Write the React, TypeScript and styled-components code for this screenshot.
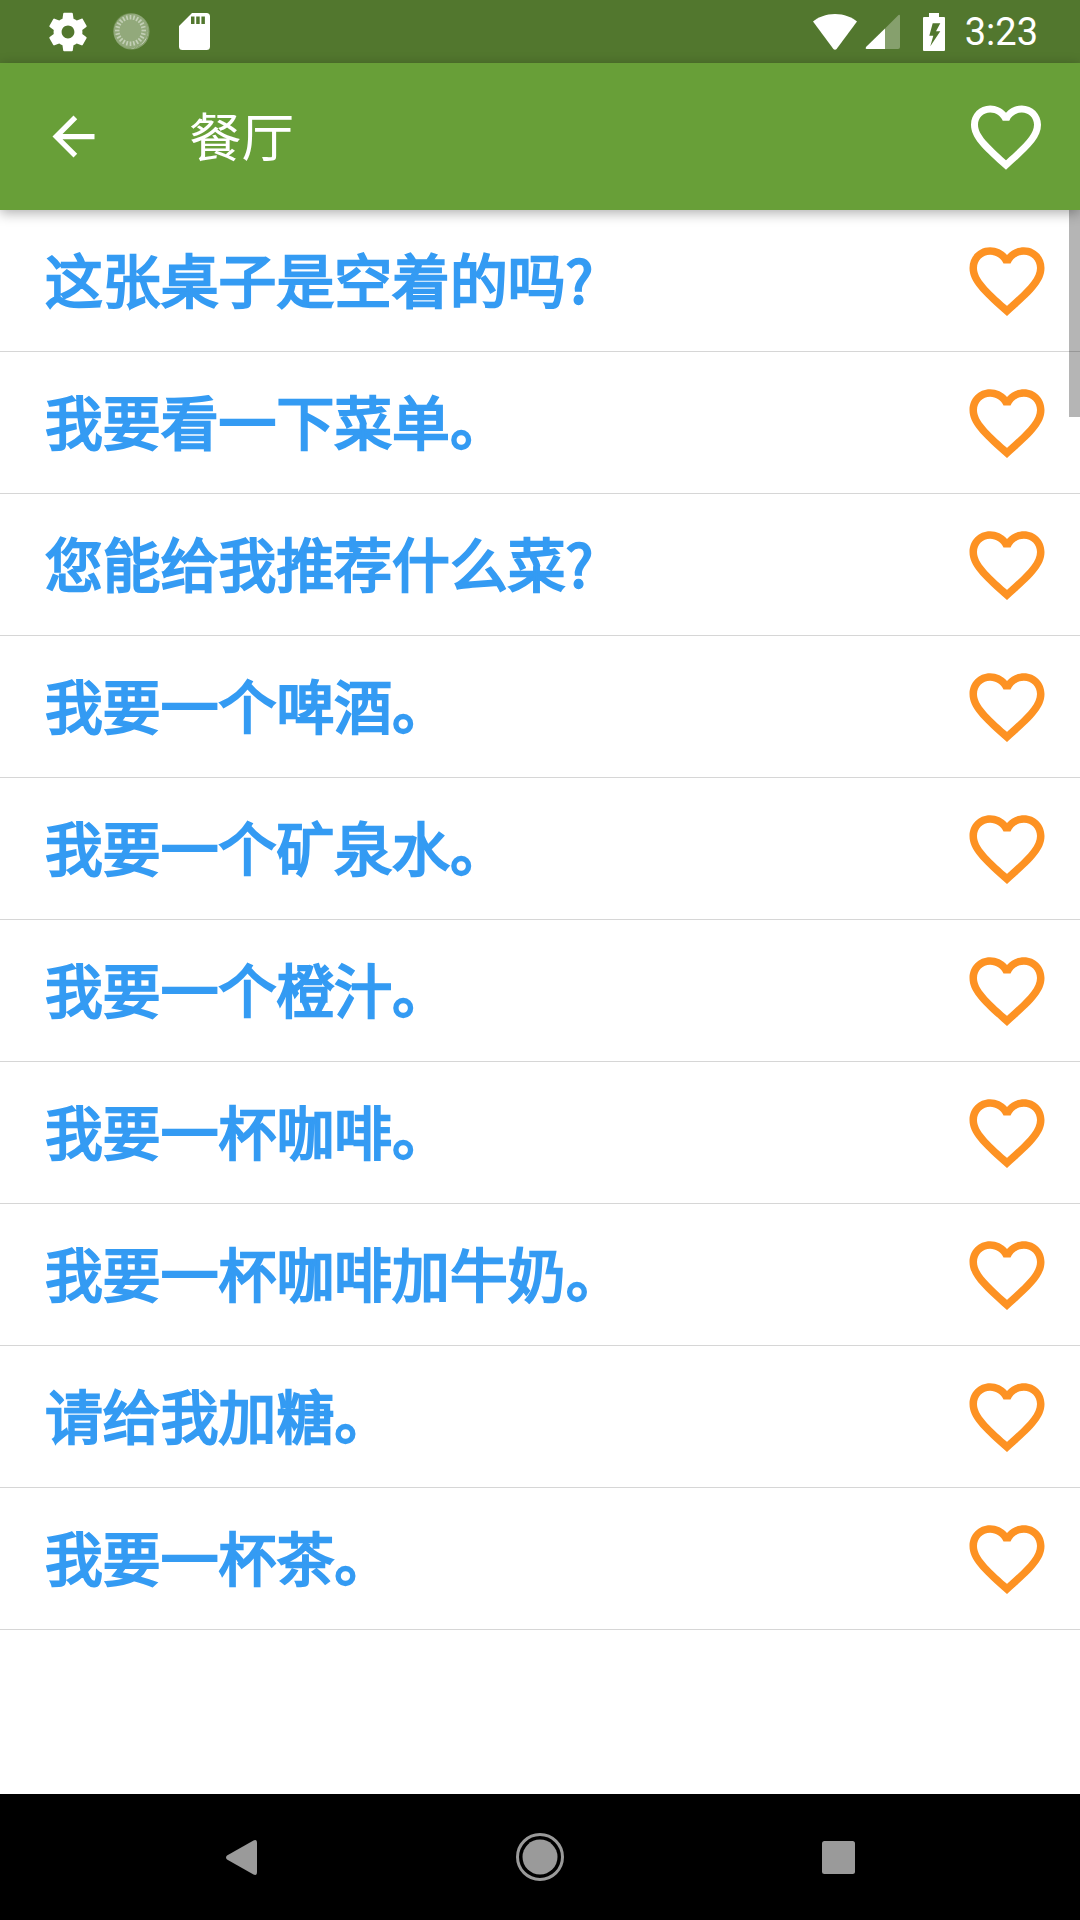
import React from 'react';
import styled, { createGlobalStyle } from 'styled-components';

const GlobalStyle = createGlobalStyle`
  html, body {
    margin: 0;
    padding: 0;
    background: #fff;
  }
`;

const Screen = styled.div`
  width: 1080px;
  height: 1920px;
  display: flex;
  flex-direction: column;
  overflow: hidden;
  font-family: Roboto, 'Noto Sans CJK SC', sans-serif;
`;

const StatusBar = styled.div`
  height: 63px;
  flex: none;
  background: #52772e;
  display: flex;
  align-items: center;
  justify-content: space-between;
  padding: 0 42px 0 44px;
`;

const StatusGroup = styled.div`
  display: flex;
  align-items: center;
`;

const StatusIcon = styled.svg<{ $gap?: number; $nudge?: number }>`
  display: block;
  flex: none;
  margin-left: ${({ $gap }) => $gap ?? 0}px;
  margin-top: ${({ $nudge }) => $nudge ?? 0}px;
`;

const Clock = styled.span`
  margin-left: 20px;
  font-size: 38px;
  line-height: 63px;
  padding-top: 2px;
  color: #fff;
`;

const AppBar = styled.header`
  height: 147px;
  flex: none;
  background: #689f38;
  display: flex;
  align-items: center;
  padding: 0 32px 0 42px;
  box-shadow: 0 3px 12px rgba(0, 0, 0, 0.32);
  position: relative;
  z-index: 1;
`;

const Title = styled.h1`
  flex: 1;
  margin: 5px 0 0 84px;
  font-size: 52.5px;
  font-weight: 400;
  line-height: 1;
  color: #fff;
`;

const PhraseList = styled.main`
  flex: 1;
  position: relative;
`;

const Row = styled.div`
  height: 142px;
  box-sizing: border-box;
  display: flex;
  align-items: center;
  justify-content: space-between;
  padding: 0 28.5px 0 45px;
  border-bottom: 1px solid #d6d6d6;
`;

const Phrase = styled.span`
  font-family: 'Noto Sans CJK SC', sans-serif;
  font-size: 57.75px;
  font-weight: 400;
  line-height: 1;
  padding-bottom: 3px;
  letter-spacing: 0.1px;
  color: #349bf3;
  -webkit-text-stroke: 2.4px #349bf3;
`;

const Scrollbar = styled.div`
  position: absolute;
  top: 0;
  right: 0;
  width: 11px;
  height: 207px;
  background: rgba(0, 0, 0, 0.29);
`;

const NavBar = styled.nav`
  height: 126px;
  flex: none;
  background: #000;
  display: flex;
  align-items: center;
  padding-left: 226px;
`;

const HeartPath =
  'M16.5 3c-1.74 0-3.41.81-4.5 2.09C10.91 3.81 9.24 3 7.5 3 4.42 3 2 5.42 2 8.5c0 3.78 3.4 6.86 8.55 11.54L12 21.35l1.45-1.32C18.6 15.36 22 12.28 22 8.5 22 5.42 19.58 3 16.5 3zm-4.4 15.55l-.1.1-.1-.1C7.14 14.24 4 11.39 4 8.5 4 6.5 5.5 5 7.5 5c1.54 0 3.04.99 3.57 2.36h1.87C13.46 5.99 14.96 5 16.5 5c2 0 3.5 1.5 3.5 3.5 0 2.89-3.14 5.74-7.9 10.05z';

function Heart({ size, color }: { size: number; color: string }) {
  return (
    <svg width={size} height={size} viewBox='0 0 24 24' fill={color} style={{ flex: 'none' }}>
      <path d={HeartPath} />
    </svg>
  );
}

const phrases = [
  '这张桌子是空着的吗?',
  '我要看一下菜单。',
  '您能给我推荐什么菜?',
  '我要一个啤酒。',
  '我要一个矿泉水。',
  '我要一个橙汁。',
  '我要一杯咖啡。',
  '我要一杯咖啡加牛奶。',
  '请给我加糖。',
  '我要一杯茶。',
];

function App() {
  return (
    <Screen>
      <GlobalStyle />
      <StatusBar>
        <StatusGroup>
          <StatusIcon width={48} height={48} viewBox='0 0 24 24' fill='#fff' $nudge={1}>
            <path d='M19.14 12.94c.04-.3.06-.61.06-.94 0-.32-.02-.64-.07-.94l2.03-1.58c.18-.14.23-.41.12-.61l-1.92-3.32c-.12-.22-.37-.29-.59-.22l-2.39.96c-.5-.38-1.03-.7-1.62-.94l-.36-2.54c-.04-.24-.24-.41-.48-.41h-3.84c-.24 0-.43.17-.47.41l-.36 2.54c-.59.24-1.13.57-1.62.94l-2.39-.96c-.22-.08-.47 0-.59.22L2.74 8.87c-.12.21-.08.47.12.61l2.03 1.58c-.05.3-.09.63-.09.94s.02.64.07.94l-2.03 1.58c-.18.14-.23.41-.12.61l1.92 3.32c.12.22.37.29.59.22l2.39-.96c.5.38 1.03.7 1.62.94l.36 2.54c.05.24.24.41.48.41h3.84c.24 0 .44-.17.47-.41l.36-2.54c.59-.24 1.13-.56 1.62-.94l2.39.96c.22.08.47 0 .59-.22l1.92-3.32c.12-.22.07-.47-.12-.61l-2.01-1.58zM12 15.2c-1.77 0-3.2-1.43-3.2-3.2s1.43-3.2 3.2-3.2 3.2 1.43 3.2 3.2-1.43 3.2-3.2 3.2z' />
          </StatusIcon>
          <StatusIcon width={38} height={38} viewBox='0 0 38 38' $gap={21}>
            <circle cx='18.5' cy='18.5' r='18' fill='#fff' opacity='0.3' />
            <circle cx='17.5' cy='17.5' r='17.5' fill='#fff' opacity='0.1' />
            {Array.from({ length: 24 }, (_, i) => {
              const a = (i * Math.PI) / 12;
              return (
                <line
                  key={i}
                  x1={17.5 + 11 * Math.cos(a)}
                  y1={17.5 + 11 * Math.sin(a)}
                  x2={17.5 + 15.5 * Math.cos(a)}
                  y2={17.5 + 15.5 * Math.sin(a)}
                  stroke='#fff'
                  strokeWidth='1.7'
                  opacity='0.45'
                />
              );
            })}
            <path d='M34 12A17.8 17.8 0 0 1 11 34.2A17.5 17.5 0 0 0 34 12z' fill='#fff' />
          </StatusIcon>
          <StatusIcon width={31} height={37} viewBox='0 0 31 37' $gap={28}>
            <path
              fillRule='evenodd'
              fill='#fff'
              d='M13 0H27.5Q31 0 31 3.5V33.5Q31 37 27.5 37H3.5Q0 37 0 33.5V13zM12 3.5V11H15.5V3.5zM17.2 3.5V11H20.7V3.5zM22.4 3.5V11H25.9V3.5z'
            />
          </StatusIcon>
        </StatusGroup>
        <StatusGroup>
          <StatusIcon width={44} height={36} viewBox='0 0 44 36' fill='#fff'>
            <path d='M22 0C31 0 39 3.2 44 7.6L23.6 35a2 2 0 0 1-3.2 0L0 7.6C5 3.2 13 0 22 0z' />
          </StatusIcon>
          <StatusIcon width={35} height={35} viewBox='0 0 35 35' $gap={8} fill='#fff'>
            <path d='M1 33L20 14.5V35H1.5Q0 35 1 33z' />
            <path d='M20 14.5L33.5 1Q35 0 35 2V33Q35 35 33 35H20z' opacity='0.3' />
          </StatusIcon>
          <StatusIcon width={22} height={38} viewBox='0 0 22 38' $gap={23} fill='#fff'>
            <path
              fillRule='evenodd'
              d='M6 0H16V4H21Q22 4 22 5V37Q22 38 21 38H1Q0 38 0 37V5Q0 4 1 4H6zM9.7 10.3L6.3 22.7H10.3L7.3 33.3L17.3 18.3H13L17.3 10.3z'
            />
          </StatusIcon>
          <Clock>3:23</Clock>
        </StatusGroup>
      </StatusBar>
      <AppBar>
        <svg width={63} height={63} viewBox='0 0 24 24' fill='#fff' style={{ flex: 'none' }}>
          <path d='M20 11H7.83l5.59-5.59L12 4l-8 8 8 8 1.41-1.41L7.83 13H20v-2z' />
        </svg>
        <Title>餐厅</Title>
        <Heart size={84} color='#fff' />
      </AppBar>
      <PhraseList>
        {phrases.map((text) => (
          <Row key={text}>
            <Phrase>{text}</Phrase>
            <Heart size={90} color='#fd9223' />
          </Row>
        ))}
        <Scrollbar />
      </PhraseList>
      <NavBar>
        <StatusIcon width={31} height={35} viewBox='0 0 31 35' fill='#9a9a9a'>
          <path d='M1 19.5Q-1 17.5 1 15.5L27.5 0.5Q31 -1 31 3V32Q31 36 27.5 34.5z' />
        </StatusIcon>
        <StatusIcon width={48} height={48} viewBox='0 0 48 48' $gap={259}>
          <circle cx='24' cy='24' r='22.5' fill='none' stroke='#9a9a9a' strokeWidth='3' />
          <circle cx='24' cy='24' r='17.5' fill='#9a9a9a' />
        </StatusIcon>
        <StatusIcon width={33} height={33} viewBox='0 0 33 33' $gap={258} fill='#9a9a9a'>
          <rect width='33' height='33' rx='2.5' />
        </StatusIcon>
      </NavBar>
    </Screen>
  );
}

export default App;
